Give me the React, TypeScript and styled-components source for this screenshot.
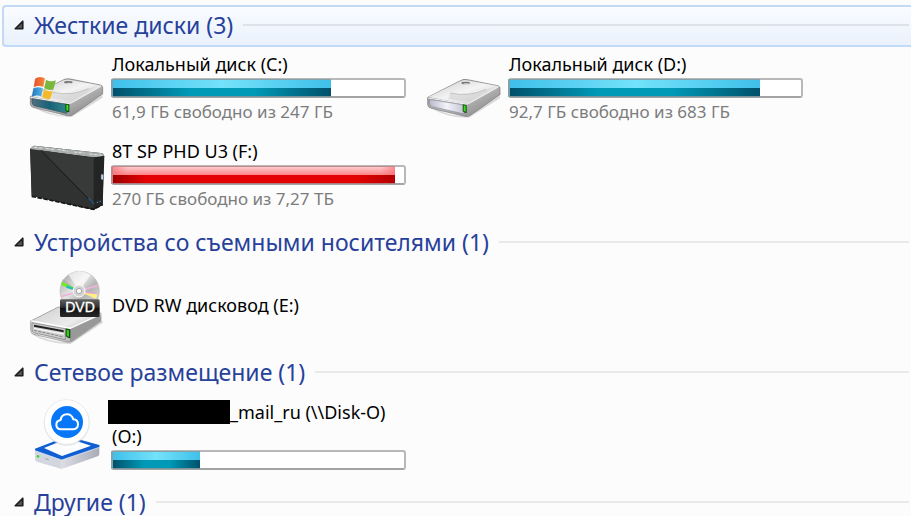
import React, { useId, useState } from "react";
import styled, { createGlobalStyle, css } from "styled-components";

const GlobalStyle = createGlobalStyle`
  *, *::before, *::after { box-sizing: border-box; }
  body {
    margin: 0;
    background: #fcfcfc;
    color: #000;
    font-family: "Noto Sans", "Open Sans", sans-serif;
  }
`;

const Page = styled.main`
  height: 100vh;
  padding: 5px 0 0 2px;
  overflow: hidden;
`;

const GroupHeader = styled.h2<{ $selected?: boolean }>`
  display: flex;
  align-items: center;
  height: 42px;
  margin: 0;
  padding: 0 0 2px 10px;
  border: 2px solid transparent;
  border-right: 0;
  border-radius: 4px 0 0 4px;
  font-weight: 400;
  ${(p) =>
    p.$selected &&
    css`
      border-color: #c3daf6;
      background: linear-gradient(#fafcff, #e9f1fc);
    `}
`;

const GroupToggle = styled.button`
  display: flex;
  align-items: center;
  gap: 10px;
  padding: 0;
  border: 0;
  background: none;
  color: #27419b;
  font: inherit;
  font-size: 23px;
  line-height: 26px;
  white-space: nowrap;
  cursor: pointer;
`;

const Rule = styled.span<{ $selected?: boolean }>`
  flex: 1;
  height: 2px;
  margin: 0 2px 0 10px;
  background: ${(p) => (p.$selected ? "#dce2e9" : "#e9e9e9")};
`;

const DriveList = styled.ul`
  display: grid;
  grid-template-columns: repeat(auto-fill, 397px);
  grid-auto-rows: 87px;
  margin: 0;
  padding: 0 0 1px 27px;
  list-style: none;
`;

const DriveItem = styled.li`
  display: flex;
  align-items: flex-start;
  gap: 6px;
  padding-top: 5px;
`;

const IconBox = styled.svg`
  flex: none;
  width: 76px;
  height: 72px;
  overflow: visible;
`;

const Details = styled.div`
  display: flex;
  flex-direction: column;
  justify-content: center;
  gap: 2px;
  width: 295px;
  min-height: 72px;
`;

const DriveName = styled.div`
  padding-left: 1px;
  font-size: 18px;
  line-height: 24px;
  overflow-wrap: anywhere;
`;

const FreeSpace = styled.div`
  padding-left: 1px;
  color: #7c7c7c;
  font-size: 17px;
  line-height: 24px;
  white-space: nowrap;
`;

const Redaction = styled.span`
  display: inline-block;
  width: 122px;
  height: 24px;
  margin-left: -4px;
  background: #000;
  vertical-align: bottom;
`;

const Track = styled.div`
  height: 20px;
  border: 2px solid #b8b8b8;
  border-bottom-color: #a3a3a3;
  border-radius: 3px;
  background: #fff;
`;

const Fill = styled.div<{ $critical?: boolean }>`
  height: 100%;
  background: ${(p) =>
    p.$critical
      ? `linear-gradient(90deg, #a00000, #e40000 12% 86%, #b40000) bottom / 100% 50% no-repeat,
         linear-gradient(90deg, #fa6c70aa, transparent 5% 95%, #fa6c70aa) top / 100% 50% no-repeat,
         linear-gradient(#ffc9cc, #fb8387 50%)`
      : `linear-gradient(90deg, #00506a, #0099b6 35% 65%, #00506a) bottom / 100% 50% no-repeat,
         linear-gradient(90deg, #3fc0ea, #74e2fa 50%, #3fc0ea) top / 100% 50% no-repeat`};
  box-shadow: -1px 0 0 1px ${(p) => (p.$critical ? "#c1464666" : "#317f9466")};
`;

const Arrow = () => (
  <svg width="10" height="10" viewBox="0 0 12 12" aria-hidden="true">
    <path d="M10.5 1.5V10.5H1.5Z" fill="#555" stroke="#1f1f1f" strokeWidth="2" strokeLinejoin="round" />
  </svg>
);

function HardDiskIcon({ system = false }: { system?: boolean }) {
  const id = useId();
  return (
    <IconBox viewBox={system ? "27 -39 228 216" : "18 -39 228 216"} aria-hidden="true">
      <defs>
        <linearGradient id={id + "top"} x1="0" y1="0" x2="1" y2="1">
          <stop offset="0" stopColor="#c9c9c9" />
          <stop offset=".5" stopColor="#f4f4f4" />
          <stop offset="1" stopColor="#c4c4c4" />
        </linearGradient>
        <linearGradient id={id + "side"} x1="0" y1="0" x2="1" y2="1">
          <stop offset="0" stopColor="#777" />
          <stop offset=".5" stopColor="#bdbdbd" />
          <stop offset="1" stopColor="#777" />
        </linearGradient>
        <linearGradient id={id + "face"}>
          <stop offset="0" stopColor={system ? "#526f80" : "#b9bac9"} />
          <stop offset=".5" stopColor={system ? "#176278" : "#f3f3fb"} />
          <stop offset="1" stopColor={system ? "#32858c" : "#c5c5d2"} />
        </linearGradient>
        <linearGradient id={id + "flagR"}><stop stopColor="#e4502e" /><stop offset="1" stopColor="#f58a38" /></linearGradient>
        <linearGradient id={id + "flagB"}><stop stopColor="#2374ba" /><stop offset="1" stopColor="#57b9e8" /></linearGradient>
      </defs>
      <g transform={system ? "translate(8 -4)" : "translate(0 -2)"}>
        <path d="M28 119Q70 154 139 157L240 94V102L147 160Q80 162 28 128Z" fill="#bbb" opacity=".55" />
        <path d="M23 99 121 49Q132 43 143 46L233 64Q240 66 240 72V91L151 153Q144 158 134 156L31 131Q24 129 23 121Z" fill={`url(#${id}side)`} stroke="#777" strokeWidth="2" />
        <path d="M25 98 122 50Q132 46 141 48L236 66 149 116Q142 119 134 118Z" fill={`url(#${id}top)`} />
        <path d="M90 87Q150 101 205 73L225 67 149 112 85 104Z" fill="#d2d2d2" opacity=".6" />
        <path d="M91 86Q146 99 198 75" fill="none" stroke="#aaa" strokeWidth="2" />
        <ellipse cx="137" cy="56" rx="13" ry="4" fill="#777" />
        <ellipse cx="139" cy="59" rx="9" ry="2" fill="#ddd" />
        <path d="M24 101 134 119Q143 121 149 116L235 68" fill="none" stroke="#f5f5f5" strokeWidth="3" />
        <path d="M28 105 127 121Q132 122 132 128V149L37 127Q28 124 28 115Z" fill={`url(#${id}face)`} stroke={system ? "#345260" : "#8d8d98"} strokeWidth="2" />
        <path d="M128 120 140 122V146L134 145 128 141Z" fill="#174d12" />
        <path d="M131 123 137 124V142L131 140Z" fill="#36df1c" />
      </g>
      {system && (
        <g stroke="#fff" strokeOpacity=".35" transform="translate(0 -3)">
          <path d="M45 44Q57 34 75 43L70 69Q55 62 41 70Z" fill={`url(#${id}flagR)`} />
          <path d="M78 47Q92 56 108 49L100 77Q87 81 72 73Z" fill="#79b63c" />
          <path d="M40 73Q55 66 69 73L64 98Q49 90 35 99Z" fill={`url(#${id}flagB)`} />
          <path d="M72 76Q86 85 99 80L91 105Q79 108 66 99Z" fill="#f3bb2c" />
        </g>
      )}
    </IconBox>
  );
}

function PortableDiskIcon() {
  return (
    <IconBox viewBox="27 9 228 216" aria-hidden="true">
      <path d="M30 38 42 29 248 52 253 61 248 207 221 222 35 180Z" fill="#252627" />
      <path d="M30 38 42 29 248 52 252 61 222 64 34 41Z" fill="#aaaead" />
      <path d="M42 34 66 36M78 37 102 41M113 40 144 46M162 48 193 51M208 54 246 58" stroke="#e1e3e3" strokeWidth="3" strokeDasharray="10 4" />
      <path d="M31 39 221 65V221L35 179Z" fill="#303131" />
      <path d="M223 65 251 60 248 206 223 220Z" fill="#232424" />
      <path d="M62 43 220 202 221 65Z" fill="#383939" />
      <path d="m63 43 157 161" stroke="#151616" strokeWidth="3" />
      <path d="m205 186 17 18" stroke="#205788" strokeWidth="4" />
      <path d="M35 181 221 220 248 206" fill="none" stroke="#151515" strokeWidth="5" strokeDasharray="13 5" />
      <path d="m244 115 6 1-1 15-6-2Z" fill="#c8d9f4" stroke="#8291aa" />
      <path d="m231 200 3-2m5-1 3-2" stroke="#458bc4" strokeWidth="4" />
    </IconBox>
  );
}

function DvdIcon() {
  const id = useId();
  return (
    <IconBox viewBox="27 12 228 216" aria-hidden="true">
      <defs>
        <linearGradient id={id + "body"} x1="0" y1="0" x2="1" y2="1">
          <stop stopColor="#ccc" /><stop offset=".5" stopColor="#ececec" /><stop offset="1" stopColor="#888" />
        </linearGradient>
        <linearGradient id={id + "disc"} x1="0" y1="0" x2="1" y2="1">
          <stop stopColor="#999" /><stop offset=".4" stopColor="#e6e6e6" /><stop offset=".6" stopColor="#b4b4b4" /><stop offset="1" stopColor="#e6e6e6" />
        </linearGradient>
        <linearGradient id={id + "label"} x1="0" y1="0" x2="0" y2="1">
          <stop stopColor="#606060" /><stop offset=".45" stopColor="#303030" /><stop offset=".5" stopColor="#111" /><stop offset="1" stopColor="#282828" />
        </linearGradient>
      </defs>
      <path d="M35 204Q80 235 151 234L248 170" fill="none" stroke="#ccc" strokeWidth="6" opacity=".7" />
      <path d="M32 168 115 126 243 145V169L158 228Q151 233 140 231L41 208Q32 205 32 195Z" fill={`url(#${id}body)`} stroke="#888" strokeWidth="2" />
      <path d="M34 168 144 189Q152 191 159 186L241 148" fill="none" stroke="#fff" strokeWidth="4" />
      <path d="M150 193 242 151V169L157 227 150 229Z" fill="#999" />
      <path d="M36 173 136 191V224L44 204Q36 202 36 194Z" fill="#cacaca" stroke="#777" strokeWidth="2" />
      <path d="m42 179 89 17v6l-89-17Z" fill="#202020" />
      <path d="m42 188 89 17v4l-89-17Z" fill="#f7f7f7" />
      <path d="m42 196 89 20" stroke="#888" strokeWidth="3" strokeDasharray="9 4" />
      <path d="m137 190 14 3v27l-6-1-8-5Z" fill="#164d12" /><path d="m140 194 7 2v20l-7-4Z" fill="#32cb19" />
      <circle cx="179" cy="78" r="59" fill={`url(#${id}disc)`} stroke="#bbb" strokeWidth="2" />
      <path d="M179 78 145 29Q178 7 212 29Z" fill="#fff" opacity=".65" />
      <path d="m179 78-57-24 6-13Z" fill="#888" opacity=".25" />
      <path d="m123 59 5-8 35 17-6 7Z" fill="#70ed1e" /><path d="m142 61 23 10-2 5-25-8Z" fill="#22bdbb" />
      <path d="m177 78-53 17M181 78l52-17" stroke="#efb4db" strokeWidth="5" />
      <path d="m183 82 49 6-4 13Z" fill="#fff17f" /><path d="m183 81 48 5" stroke="#f49ddd" strokeWidth="3" />
      <circle cx="177" cy="78" r="18" fill="#d2d2d2" stroke="#fff" strokeWidth="3" />
      <circle cx="177" cy="78" r="8" fill="#fafafa" stroke="#aaa" strokeWidth="3" />
      <rect x="120" y="103" width="119" height="53" rx="4" fill={`url(#${id}label)`} />
      <text x="180" y="142" fill="#fff" textAnchor="middle" fontFamily="Liberation Sans, sans-serif" fontSize="42" stroke="#fff" strokeWidth="1">DVD</text>
    </IconBox>
  );
}

function CloudDiskIcon() {
  const id = useId();
  return (
    <IconBox viewBox="27 12 228 216" aria-hidden="true">
      <defs>
        <linearGradient id={id} x1="0" x2="1"><stop stopColor="#dcdde3" /><stop offset="1" stopColor="#a9acb8" /></linearGradient>
      </defs>
      <path d="m45 166 80 28v28l-74-22q-6-2-6-8Z" fill="#d3d6df" />
      <path d="m125 194 113-43v26q0 5-5 7l-108 38Z" fill={`url(#${id})`} />
      <path d="m45 161 97-37 96 26v7l-113 38-80-28Z" fill="#105fd2" />
      <path d="m72 159 72-29 69 22-87 31Z" fill="#fcfdff" />
      <path d="m45 167 80 28 113-38" fill="none" stroke="#eff3fb" strokeWidth="2" />
      <circle cx="54" cy="184" r="4" fill="#33d936" /><path d="m76 191 10 3" stroke="#9da0a9" strokeWidth="3" />
      <circle cx="140" cy="83" r="69" fill="#ccc" opacity=".5" />
      <circle cx="140" cy="81" r="67" fill="#fff" stroke="#e4e6e9" strokeWidth="2" />
      <circle cx="141" cy="81" r="48" fill="#0877f7" />
      <path d="M123 103q-14-1-14-14 0-12 13-14 2-17 19-17 14 0 19 15 14 1 14 15 0 14-14 15Z" fill="none" stroke="#fff" strokeWidth="6" strokeLinejoin="round" />
    </IconBox>
  );
}

interface DriveProps {
  icon: React.ReactNode;
  name: React.ReactNode;
  label?: string;
  used?: number;
  free?: string;
  critical?: boolean;
}

function Drive({ icon, name, label, used, free, critical }: DriveProps) {
  return (
    <DriveItem>
      {icon}
      <Details>
        <DriveName>{name}</DriveName>
        {used !== undefined && (
          <Track role="progressbar" aria-label={label} aria-valuenow={used} aria-valuemin={0} aria-valuemax={100}>
            <Fill $critical={critical} style={{ width: `${used}%` }} />
          </Track>
        )}
        {free && <FreeSpace>{free}</FreeSpace>}
      </Details>
    </DriveItem>
  );
}

interface GroupProps {
  title: string;
  selected?: boolean;
  children?: React.ReactNode;
}

function Group({ title, selected, children }: GroupProps) {
  const [open, setOpen] = useState(true);
  return (
    <section>
      <GroupHeader $selected={selected}>
        <GroupToggle type="button" aria-expanded={open} onClick={() => setOpen(!open)}>
          <Arrow />
          {title}
        </GroupToggle>
        <Rule $selected={selected} />
      </GroupHeader>
      {open && children && <DriveList>{children}</DriveList>}
    </section>
  );
}

export default function App() {
  return (
    <>
      <GlobalStyle />
      <Page>
        <Group title="Жесткие диски (3)" selected>
          <Drive icon={<HardDiskIcon system />} name="Локальный диск (C:)" label="C:" used={75} free="61,9 ГБ свободно из 247 ГБ" />
          <Drive icon={<HardDiskIcon />} name="Локальный диск (D:)" label="D:" used={86} free="92,7 ГБ свободно из 683 ГБ" />
          <Drive icon={<PortableDiskIcon />} name="8T SP PHD U3 (F:)" label="F:" used={97} free="270 ГБ свободно из 7,27 ТБ" critical />
        </Group>
        <Group title="Устройства со съемными носителями (1)">
          <Drive icon={<DvdIcon />} name="DVD RW дисковод (E:)" />
        </Group>
        <Group title="Сетевое размещение (1)">
          <Drive icon={<CloudDiskIcon />} name={<><Redaction />_mail_ru (\\Disk-O) (O:)</>} label="O:" used={30} />
        </Group>
        <Group title="Другие (1)" />
      </Page>
    </>
  );
}
